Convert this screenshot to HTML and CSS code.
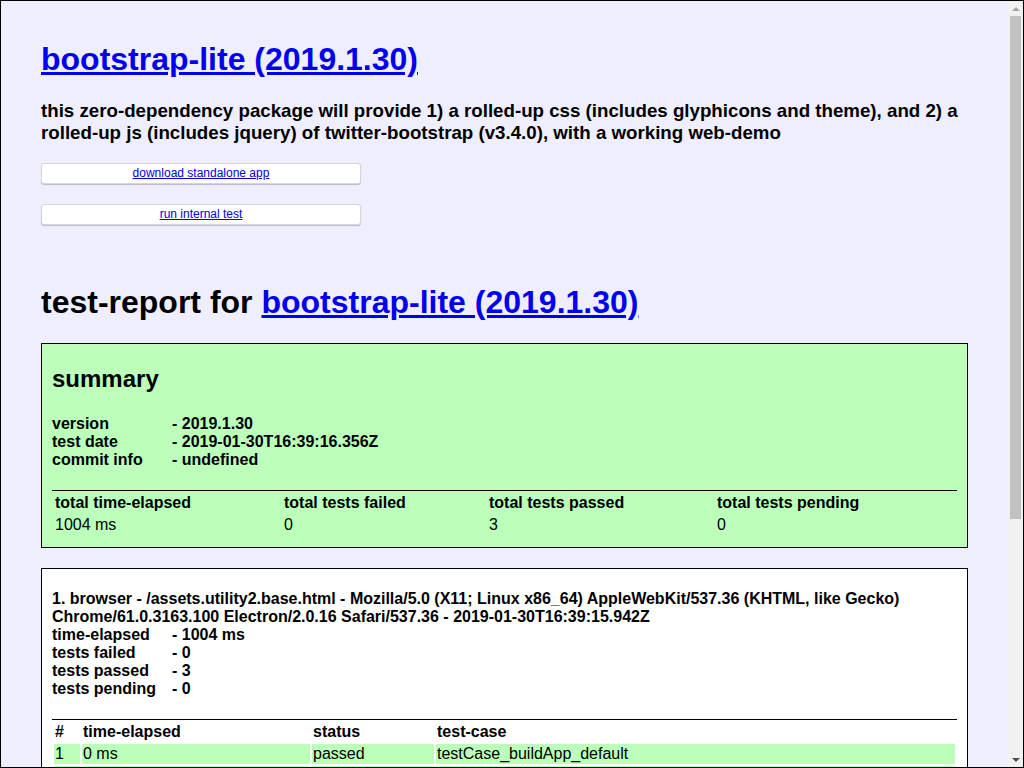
FILE: index.html
```html
<!DOCTYPE html>
<html lang="en">
<head>
<meta charset="utf-8">
<title>bootstrap-lite (2019.1.30)</title>
<link rel="stylesheet" href="styles.css">
</head>
<body>
<div class="frame">
  <div class="viewport">
    <div class="page">
      <h1 class="title"><a href="#">bootstrap-lite (2019.1.30)</a></h1>
      <h3 class="desc">this zero-dependency package will provide 1) a rolled-up css (includes glyphicons and theme), and 2) a rolled-up js (includes jquery) of twitter-bootstrap (v3.4.0), with a working web-demo</h3>
      <div class="button"><a href="#">download standalone app</a></div>
      <div class="button"><a href="#">run internal test</a></div>

      <div class="report">
        <h1 class="report-title">test-report for <a href="#">bootstrap-lite (2019.1.30)</a></h1>

        <div class="box passed-box">
          <h2 class="box-title">summary</h2>
          <h4 class="info">
            <span class="label">version</span>- 2019.1.30<br>
            <span class="label">test date</span>- 2019-01-30T16:39:16.356Z<br>
            <span class="label">commit info</span>- undefined
          </h4>
          <table class="grid">
            <thead>
              <tr>
                <th class="s1">total time-elapsed</th>
                <th class="s2">total tests failed</th>
                <th class="s3">total tests passed</th>
                <th>total tests pending</th>
              </tr>
            </thead>
            <tbody>
              <tr>
                <td>1004 ms</td>
                <td>0</td>
                <td>3</td>
                <td>0</td>
              </tr>
            </tbody>
          </table>
        </div>

        <div class="box">
          <h4 class="info first">
            1. browser - /assets.utility2.base.html - Mozilla/5.0 (X11; Linux x86_64) AppleWebKit/537.36 (KHTML, like Gecko) Chrome/61.0.3163.100 Electron/2.0.16 Safari/537.36 - 2019-01-30T16:39:15.942Z<br>
            <span class="label">time-elapsed</span>- 1004 ms<br>
            <span class="label">tests failed</span>- 0<br>
            <span class="label">tests passed</span>- 3<br>
            <span class="label">tests pending</span>- 0
          </h4>
          <table class="grid">
            <thead>
              <tr>
                <th class="t1">#</th>
                <th class="t2">time-elapsed</th>
                <th class="t3">status</th>
                <th>test-case</th>
              </tr>
            </thead>
            <tbody>
              <tr class="passed">
                <td>1</td>
                <td>0 ms</td>
                <td>passed</td>
                <td>testCase_buildApp_default</td>
              </tr>
              <tr class="passed">
                <td>2</td>
                <td>2 ms</td>
                <td>passed</td>
                <td>testCase_buildReadme_default</td>
              </tr>
              <tr class="passed">
                <td>3</td>
                <td>1001 ms</td>
                <td>passed</td>
                <td>testCase_webpage_default</td>
              </tr>
            </tbody>
          </table>
        </div>
      </div>

      <div class="footer">[ this app was created with <a href="#">utility2</a> ]</div>
    </div>
  </div>
  <div class="scrollbar" aria-hidden="true">
    <div class="sb-btn"><span class="sb-arrow-up"></span></div>
    <div class="sb-track"><div class="sb-thumb"></div></div>
    <div class="sb-btn"><span class="sb-arrow-down"></span></div>
  </div>
</div>
</body>
</html>
```

FILE: styles.css
```css
*,
*::before,
*::after {
  box-sizing: border-box;
}

html,
body {
  margin: 0;
  padding: 0;
  height: 100%;
  overflow: hidden;
}

body {
  font-family: "Liberation Sans", Arial, Helvetica, sans-serif;
  color: #000;
  background: #eef;
}

.frame {
  display: flex;
  height: 768px;
  border: 1px solid #000;
  background: #eef;
}

.viewport {
  flex: 1;
  min-width: 0;
  overflow: hidden;
}

.page {
  margin: 0 40px;
  padding-bottom: 40px;
}

a {
  color: #00e;
  text-decoration: underline;
  overflow-wrap: break-word;
}

.title {
  font-size: 32px;
  line-height: 37px;
  font-weight: bold;
  margin: 40px 0 22px;
}

.desc {
  font-size: 18.72px;
  line-height: 22px;
  font-weight: bold;
  margin: 0 0 19px;
}

.button {
  display: block;
  width: 320px;
  height: 21px;
  margin: 0 0 20px;
  background: #fff;
  border: 1px solid #d6d6d6;
  border-radius: 3px;
  box-shadow: 0 1px 1px rgba(0, 0, 0, 0.22);
  font-size: 12px;
  line-height: 19px;
  text-align: center;
}

.report {
  margin-top: 59px;
}

.report-title {
  font-size: 32px;
  line-height: 37px;
  font-weight: bold;
  margin: 0 0 22px;
}

.box {
  border: 1px solid #000;
  background: #fff;
  padding: 10px;
  margin-bottom: 20px;
}

.passed-box {
  background: #bfb;
}

.box-title {
  font-size: 24px;
  line-height: 28px;
  font-weight: bold;
  margin: 11px 0 22px;
}

.info {
  font-size: 16px;
  line-height: 18px;
  font-weight: bold;
  margin: 0 0 21px;
}

.info.first {
  margin-top: 11px;
}

.label {
  display: inline-block;
  width: 120px;
}

.grid {
  width: 100%;
  table-layout: fixed;
  border-top: 1px solid #000;
  border-spacing: 2px;
  text-align: left;
  font-size: 16px;
  line-height: 18px;
}

.grid th,
.grid td {
  padding: 1px;
  white-space: nowrap;
  overflow: hidden;
}

.grid th {
  font-weight: bold;
}

.grid .s1 { width: 227px; }
.grid .s2 { width: 203px; }
.grid .s3 { width: 226px; }

.grid .t1 { width: 26px; }
.grid .t2 { width: 228px; }
.grid .t3 { width: 122px; }

.passed td {
  background: #bfb;
}

.footer {
  margin-top: 221px;
  font-size: 16px;
  line-height: 18px;
  text-align: center;
}

/* drawn scrollbar (the page is taller than the window) */
.scrollbar {
  flex: 0 0 15px;
  display: flex;
  flex-direction: column;
  background: #f1f1f1;
}

.sb-btn {
  flex: 0 0 15px;
  display: flex;
  align-items: center;
  justify-content: center;
}

.sb-arrow-up,
.sb-arrow-down {
  width: 0;
  height: 0;
  border-left: 4px solid transparent;
  border-right: 4px solid transparent;
}

.sb-arrow-up {
  border-bottom: 4px solid #a3a3a3;
}

.sb-arrow-down {
  border-top: 4px solid #505050;
}

.sb-track {
  flex: 1;
  padding: 0 2px;
}

.sb-thumb {
  height: 503px;
  background: #c1c1c1;
}
```
